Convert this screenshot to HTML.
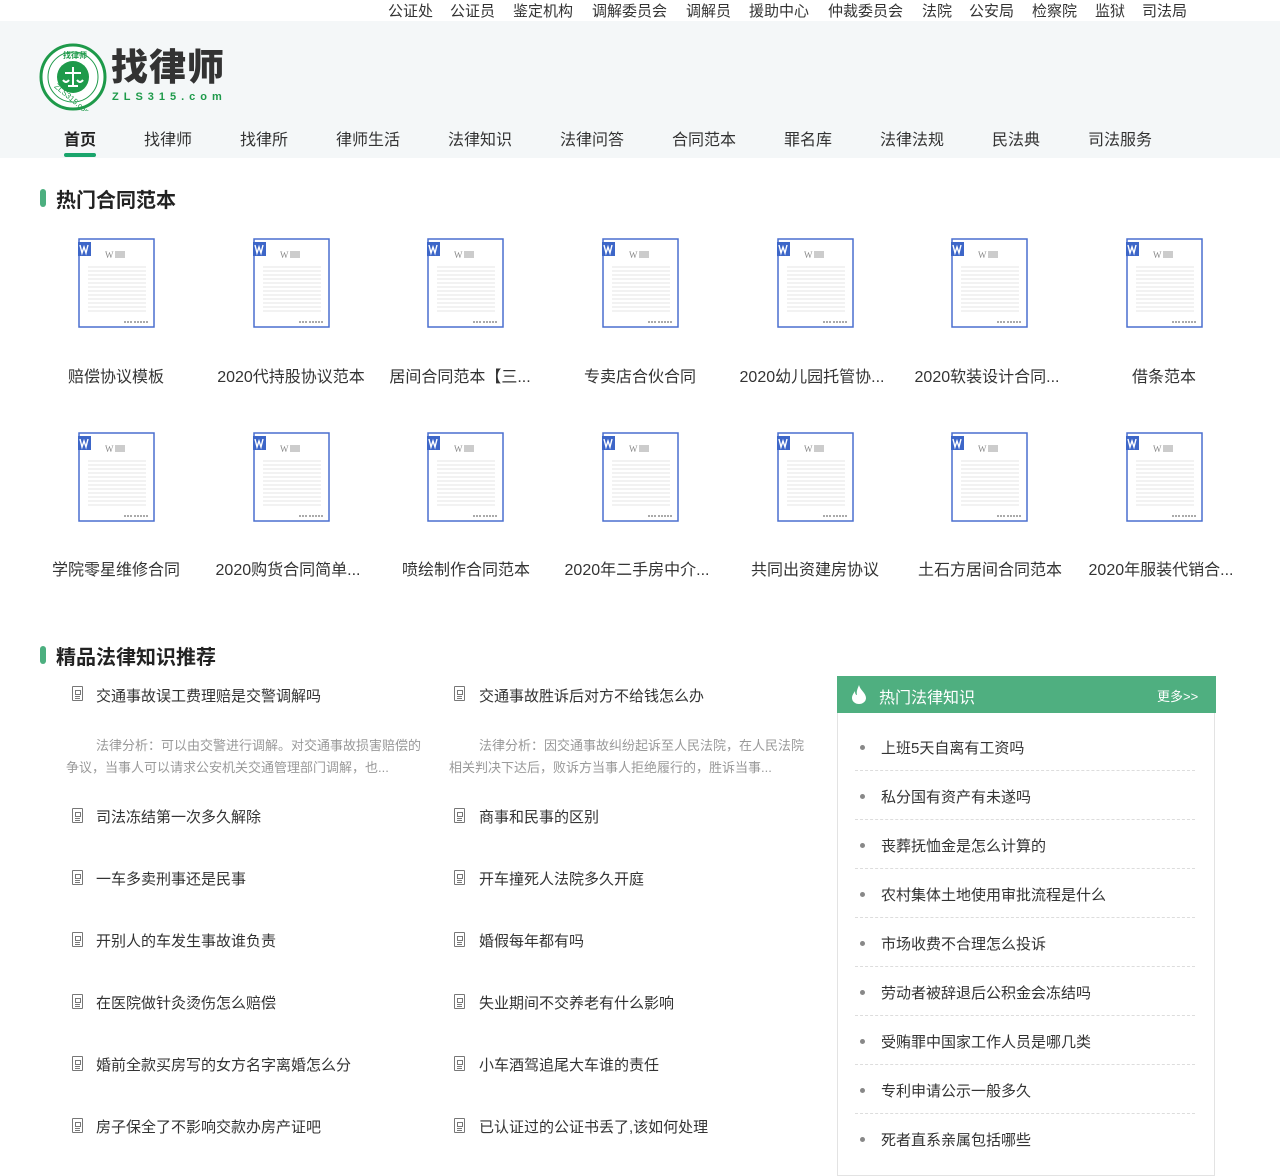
<!DOCTYPE html>
<html><head><meta charset="utf-8"><style>
*{margin:0;padding:0;box-sizing:border-box}
body{width:1280px;height:1167px;background:#fff;font-family:"Liberation Sans","Noto Sans CJK SC",sans-serif;color:#333;position:relative;overflow:hidden}
.a{position:absolute;white-space:nowrap}
.top{position:absolute;left:0;top:0;width:1280px;height:21px;background:#fff}
.hdr{position:absolute;left:0;top:21px;width:1280px;height:137px;background:#f4f7f8}
.tl{font-size:15px;color:#333;top:0px}
.nav{font-size:16px;color:#333;top:126px;transform:translateX(-50%)}
.ttl{font-size:20px;font-weight:bold;color:#222}
.bar{position:absolute;width:6px;height:18px;background:#4caf7f;border-radius:3px}
.doc{position:absolute;width:77px;height:90px}
.lbl{font-size:16px;color:#333;transform:translateX(-50%);}
.k{font-size:15px;color:#333}
.ex{font-size:13px;color:#999;line-height:22px;white-space:normal;width:366px}
.ic{position:absolute;width:11px;height:15px;border:1.5px solid #777;border-radius:1px}
.ic:before{content:"";position:absolute;left:2px;top:3px;width:4px;height:3px;border:1px solid #777}
.ic:after{content:"";position:absolute;left:2px;top:9px;width:5px;height:1px;background:#777;box-shadow:0 2px 0 #777}
.side{position:absolute;left:837px;top:676px;width:378px;height:500px;border:1px solid #e3e3e3}
.sh{position:absolute;left:837px;top:676px;width:379px;height:37px;background:#4faf80;color:#fff}
.si{position:absolute;left:855px;width:340px;height:49px;border-bottom:1px dashed #ddd;font-size:15px;color:#333}
.si span{position:absolute;left:26px;top:15px}
.si i{position:absolute;left:5px;top:23px;width:5px;height:5px;border-radius:50%;background:#888}
</style></head><body>
<div class="top"></div>
<div class="hdr"></div>
<div class="a tl" style="left:388px">公证处</div>
<div class="a tl" style="left:450px">公证员</div>
<div class="a tl" style="left:513px">鉴定机构</div>
<div class="a tl" style="left:592px">调解委员会</div>
<div class="a tl" style="left:686px">调解员</div>
<div class="a tl" style="left:749px">援助中心</div>
<div class="a tl" style="left:828px">仲裁委员会</div>
<div class="a tl" style="left:922px">法院</div>
<div class="a tl" style="left:969px">公安局</div>
<div class="a tl" style="left:1032px">检察院</div>
<div class="a tl" style="left:1095px">监狱</div>
<div class="a tl" style="left:1142px">司法局</div>

<svg class="a" style="left:39px;top:43px" width="68" height="68" viewBox="0 0 68 68">
<circle cx="34" cy="34" r="32" fill="#fff" stroke="#1e9a4a" stroke-width="3"/>
<circle cx="34" cy="34" r="25" fill="none" stroke="#1e9a4a" stroke-width="1"/>
<circle cx="34" cy="34" r="16" fill="#1e9a4a"/>
<path d="M34 24v18M26 30h16M24 37q3 4 6 0M38 37q3 4 6 0M29 43h10" stroke="#fff" stroke-width="2" fill="none"/>
<text x="24" y="15" font-size="8" fill="#1e9a4a" font-weight="bold" font-family="Noto Sans CJK SC">找律师</text>
<text x="9" y="50" font-size="8" fill="#1e9a4a" transform="rotate(40 20 55)" font-family="Liberation Sans">ZLS315.com</text>
</svg>
<div class="a" style="left:111px;top:44px;font-size:37px;font-weight:900;color:#333;letter-spacing:1px;line-height:48px">找律师</div>
<div class="a" style="left:112px;top:91px;font-size:11px;font-weight:bold;color:#1e9a4a;letter-spacing:5px">ZLS315.com</div>

<div class="a nav" style="left:80px;font-weight:bold;color:#222">首页</div>
<div class="a" style="left:64px;top:153px;width:32px;height:4px;border-radius:2px;background:#1aa56c"></div>
<div class="a nav" style="left:168px">找律师</div>
<div class="a nav" style="left:264px">找律所</div>
<div class="a nav" style="left:368px">律师生活</div>
<div class="a nav" style="left:480px">法律知识</div>
<div class="a nav" style="left:592px">法律问答</div>
<div class="a nav" style="left:704px">合同范本</div>
<div class="a nav" style="left:808px">罪名库</div>
<div class="a nav" style="left:912px">法律法规</div>
<div class="a nav" style="left:1016px">民法典</div>
<div class="a nav" style="left:1120px">司法服务</div>

<div class="bar" style="left:40px;top:189px"></div>
<div class="a ttl" style="left:56px;top:184px">热门合同范本</div>

<svg width="0" height="0" style="position:absolute"><defs><g id="d">
<rect x="1" y="1" width="75" height="88" fill="#fff" stroke="#4a6fcf" stroke-width="1.5"/>
<rect x="0" y="4" width="13" height="14" fill="#3d66c8"/>
<path d="M2 7l2 8 2-6 2 6 2-8" stroke="#fff" stroke-width="1.4" fill="none"/>
<text x="27" y="20" font-size="9" fill="#888" font-family="Liberation Serif">W</text>
<rect x="37" y="13" width="10" height="7" fill="#ccc"/>
<path d="M10 29h58M10 33h58M10 37h58M10 41h58M10 45h58M10 49h58M10 53h58M10 57h58M10 61h58M10 65h58M10 69h58M10 73h58" stroke="#e4e4e4" stroke-width="1"/>
<path d="M46 84h8M56 84h14" stroke="#aaa" stroke-width="2" stroke-dasharray="2 1"/>
</g></defs></svg>

<svg class="doc" style="left:78px;top:238px"><use href="#d"/></svg>
<svg class="doc" style="left:253px;top:238px"><use href="#d"/></svg>
<svg class="doc" style="left:427px;top:238px"><use href="#d"/></svg>
<svg class="doc" style="left:602px;top:238px"><use href="#d"/></svg>
<svg class="doc" style="left:777px;top:238px"><use href="#d"/></svg>
<svg class="doc" style="left:951px;top:238px"><use href="#d"/></svg>
<svg class="doc" style="left:1126px;top:238px"><use href="#d"/></svg>
<svg class="doc" style="left:78px;top:432px"><use href="#d"/></svg>
<svg class="doc" style="left:253px;top:432px"><use href="#d"/></svg>
<svg class="doc" style="left:427px;top:432px"><use href="#d"/></svg>
<svg class="doc" style="left:602px;top:432px"><use href="#d"/></svg>
<svg class="doc" style="left:777px;top:432px"><use href="#d"/></svg>
<svg class="doc" style="left:951px;top:432px"><use href="#d"/></svg>
<svg class="doc" style="left:1126px;top:432px"><use href="#d"/></svg>

<div class="a lbl" style="left:116px;top:363px">赔偿协议模板</div>
<div class="a lbl" style="left:291px;top:363px">2020代持股协议范本</div>
<div class="a lbl" style="left:460px;top:363px">居间合同范本【三...</div>
<div class="a lbl" style="left:640px;top:363px">专卖店合伙合同</div>
<div class="a lbl" style="left:812px;top:363px">2020幼儿园托管协...</div>
<div class="a lbl" style="left:987px;top:363px">2020软装设计合同...</div>
<div class="a lbl" style="left:1164px;top:363px">借条范本</div>
<div class="a lbl" style="left:116px;top:556px">学院零星维修合同</div>
<div class="a lbl" style="left:288px;top:556px">2020购货合同简单...</div>
<div class="a lbl" style="left:466px;top:556px">喷绘制作合同范本</div>
<div class="a lbl" style="left:637px;top:556px">2020年二手房中介...</div>
<div class="a lbl" style="left:815px;top:556px">共同出资建房协议</div>
<div class="a lbl" style="left:990px;top:556px">土石方居间合同范本</div>
<div class="a lbl" style="left:1161px;top:556px">2020年服装代销合...</div>

<div class="bar" style="left:40px;top:646px"></div>
<div class="a ttl" style="left:56px;top:641px">精品法律知识推荐</div>

<div class="ic" style="left:72px;top:686px"></div><div class="a k" style="left:96px;top:685px">交通事故误工费理赔是交警调解吗</div>
<div class="ic" style="left:454px;top:686px"></div><div class="a k" style="left:479px;top:685px">交通事故胜诉后对方不给钱怎么办</div>
<div class="a ex" style="left:66px;top:735px;text-indent:30px">法律分析：可以由交警进行调解。对交通事故损害赔偿的争议，当事人可以请求公安机关交通管理部门调解，也...</div>
<div class="a ex" style="left:449px;top:735px;text-indent:30px">法律分析：因交通事故纠纷起诉至人民法院，在人民法院相关判决下达后，败诉方当事人拒绝履行的，胜诉当事...</div>

<div class="ic" style="left:72px;top:808px"></div><div class="a k" style="left:96px;top:806px">司法冻结第一次多久解除</div>
<div class="ic" style="left:454px;top:808px"></div><div class="a k" style="left:479px;top:806px">商事和民事的区别</div>
<div class="ic" style="left:72px;top:870px"></div><div class="a k" style="left:96px;top:868px">一车多卖刑事还是民事</div>
<div class="ic" style="left:454px;top:870px"></div><div class="a k" style="left:479px;top:868px">开车撞死人法院多久开庭</div>
<div class="ic" style="left:72px;top:932px"></div><div class="a k" style="left:96px;top:930px">开别人的车发生事故谁负责</div>
<div class="ic" style="left:454px;top:932px"></div><div class="a k" style="left:479px;top:930px">婚假每年都有吗</div>
<div class="ic" style="left:72px;top:994px"></div><div class="a k" style="left:96px;top:992px">在医院做针灸烫伤怎么赔偿</div>
<div class="ic" style="left:454px;top:994px"></div><div class="a k" style="left:479px;top:992px">失业期间不交养老有什么影响</div>
<div class="ic" style="left:72px;top:1056px"></div><div class="a k" style="left:96px;top:1054px">婚前全款买房写的女方名字离婚怎么分</div>
<div class="ic" style="left:454px;top:1056px"></div><div class="a k" style="left:479px;top:1054px">小车酒驾追尾大车谁的责任</div>
<div class="ic" style="left:72px;top:1118px"></div><div class="a k" style="left:96px;top:1116px">房子保全了不影响交款办房产证吧</div>
<div class="ic" style="left:454px;top:1118px"></div><div class="a k" style="left:479px;top:1116px">已认证过的公证书丢了,该如何处理</div>

<div class="side"></div>
<div class="sh">
<svg class="a" style="left:14px;top:9px" width="16" height="19" viewBox="0 0 16 19"><path d="M8 0C9 5 15 8 15 13a7 6 0 0 1-14 0C1 10 3 8 4 6c0 3 1 4 2 4C5 6 7 3 8 0z" fill="#fff"/></svg>
<div class="a" style="left:42px;top:8px;font-size:16px">热门法律知识</div>
<div class="a" style="left:320px;top:10px;font-size:13px">更多&gt;&gt;</div>
</div>
<div class="si" style="top:722px"><i></i><span>上班5天自离有工资吗</span></div>
<div class="si" style="top:771px"><i></i><span>私分国有资产有未遂吗</span></div>
<div class="si" style="top:820px"><i></i><span>丧葬抚恤金是怎么计算的</span></div>
<div class="si" style="top:869px"><i></i><span>农村集体土地使用审批流程是什么</span></div>
<div class="si" style="top:918px"><i></i><span>市场收费不合理怎么投诉</span></div>
<div class="si" style="top:967px"><i></i><span>劳动者被辞退后公积金会冻结吗</span></div>
<div class="si" style="top:1016px"><i></i><span>受贿罪中国家工作人员是哪几类</span></div>
<div class="si" style="top:1065px"><i></i><span>专利申请公示一般多久</span></div>
<div class="si" style="top:1114px;border:none"><i></i><span>死者直系亲属包括哪些</span></div>
</body></html>
